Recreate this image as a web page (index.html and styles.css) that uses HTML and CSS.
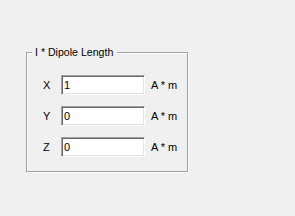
FILE: index.html
```html
<!DOCTYPE html>
<html lang="en">
<head>
    <meta charset="UTF-8">
    <title>Dipole Length</title>
    <link rel="stylesheet" href="styles.css">
</head>
<body>
    <!-- Dipole length group -->
    <div class="group">
        <div class="group-title">I * Dipole Length</div>
        <div class="rows">
            <div class="row">
                <span class="axis">X</span>
                <input class="value" type="text" value="1">
                <span class="unit">A * m</span>
            </div>
            <div class="row">
                <span class="axis">Y</span>
                <input class="value" type="text" value="0">
                <span class="unit">A * m</span>
            </div>
            <div class="row">
                <span class="axis">Z</span>
                <input class="value" type="text" value="0">
                <span class="unit">A * m</span>
            </div>
        </div>
    </div>
</body>
</html>
```

FILE: styles.css
```css
* {
    margin: 0;
    padding: 0;
    box-sizing: border-box;
    font-family: "Liberation Sans", Arial, sans-serif;
    font-size: 11px;
}

body {
    background-color: #f0f0f0;
    color: #000;
    width: 295px;
    height: 216px;
    overflow: hidden;
}

/* Group box */
.group {
    margin: 52px 0 0 26px;
    width: 162px;
    height: 120px;
    border: 1px solid #a0a0a0;
    box-shadow: inset 1px 1px 0 #fff, 1px 1px 0 #fff;
}

.group-title {
    display: table;
    margin: -7px 0 0 5px;
    padding: 0 4px 0 3px;
    line-height: 13px;
    font-size: 10.6px;
    background-color: #f0f0f0;
}

.rows {
    display: flex;
    flex-direction: column;
    gap: 11px;
    margin-top: 16px;
    padding-left: 16px;
}

.row {
    display: flex;
    align-items: center;
    height: 20px;
}

.axis {
    width: 18px;
}

.value {
    width: 84px;
    height: 20px;
    padding: 0 2px;
    background-color: #fff;
    border-style: solid;
    border-width: 1px;
    border-color: #a0a0a0 #fff #fff #a0a0a0;
    box-shadow: inset 1px 1px 0 #696969, inset -1px -1px 0 #e3e3e3;
    outline: none;
}

.unit {
    margin-left: 6px;
}
```
